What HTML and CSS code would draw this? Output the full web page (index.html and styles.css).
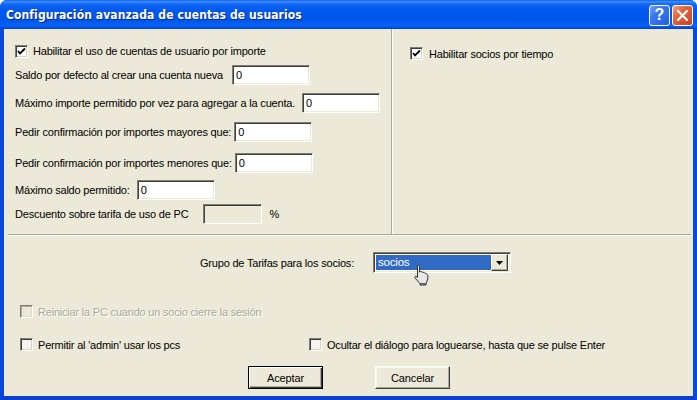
FILE: index.html
```html
<!DOCTYPE html>
<html lang="es">
<head>
<meta charset="utf-8">
<title>Configuración avanzada de cuentas de usuarios</title>
<link rel="stylesheet" href="styles.css">
</head>
<body>
<div class="window">
  <div class="titlebar">
    <span class="title">Configuración avanzada de cuentas de usuarios</span>
    <div class="tbtns">
      <span class="tbtn help">?</span>
      <span class="tbtn close"><svg width="11" height="11" viewBox="0 0 11 11"><path d="M1 1 L10 10 M10 1 L1 10" stroke="#fff" stroke-width="2.2" stroke-linecap="square"/></svg></span>
    </div>
  </div>
  <div class="client">
    <div class="top">
      <div class="left">
        <div class="row cbrow r1"><span class="cb checked"><svg width="9" height="9" viewBox="0 0 9 9"><path d="M1 4 L3 6.5 L8 1.5" stroke="#000" stroke-width="1.8" fill="none"/></svg></span><span>Habilitar el uso de cuentas de usuario por importe</span></div>
        <div class="row r2"><span>Saldo por defecto al crear una cuenta nueva</span><span class="input w77">0</span></div>
        <div class="row r3"><span>Máximo importe permitido por vez para agregar a la cuenta.</span><span class="input w77">0</span></div>
        <div class="row r4"><span>Pedir confirmación por importes mayores que:</span><span class="input w77">0</span></div>
        <div class="row r5"><span>Pedir confirmación por importes menores que:</span><span class="input w77">0</span></div>
        <div class="row r6"><span>Máximo saldo permitido:</span><span class="input w77">0</span></div>
        <div class="row r7"><span>Descuento sobre tarifa de uso de PC</span><span class="input disabled w58"></span><span class="pct">%</span></div>
      </div>
      <div class="right">
        <div class="row cbrow"><span class="cb checked"><svg width="9" height="9" viewBox="0 0 9 9"><path d="M1 4 L3 6.5 L8 1.5" stroke="#000" stroke-width="1.8" fill="none"/></svg></span><span>Habilitar socios por tiempo</span></div>
      </div>
    </div>
    <div class="sep"></div>
    <div class="grupo">
      <span class="glabel">Grupo de Tarifas para los socios:</span>
      <div class="combo">
        <span class="csel">socios</span>
        <span class="cbtn"><svg width="7" height="4" viewBox="0 0 7 4"><path d="M0 0 H7 L3.5 4 Z" fill="#000"/></svg></span>
        <svg class="cursor" width="18" height="22" viewBox="0 0 18 22"><path d="M5.5 1.5 C6.5 0.8 7.5 1.2 7.5 2.5 V8 L8.5 7.5 C9.5 7.2 10.2 7.8 10.3 8.5 C11 8 12 8.2 12.3 9 C13 8.8 14 9.2 14.2 10 C15 10 15.8 10.5 15.8 11.5 V15 L14 19.5 H8 L3 14 C2.3 13.2 2.8 12 4 12.3 L5.5 13.5 Z" fill="#e8e8e8" stroke="#333" stroke-width="1"/><path d="M8 19.5 V21 H14 V19.5" fill="#999" stroke="#333" stroke-width="1"/></svg>
      </div>
    </div>
    <div class="cbrow reiniciar disabled-text"><span class="cb dis"></span><span>Reiniciar la PC cuando un socio cierre la sesión</span></div>
    <div class="pair">
      <div class="cbrow"><span class="cb"></span><span>Permitir al 'admin' usar los pcs</span></div>
      <div class="cbrow"><span class="cb"></span><span>Ocultar el diálogo para loguearse, hasta que se pulse Enter</span></div>
    </div>
    <div class="buttons">
      <button class="btn default">Aceptar</button>
      <button class="btn">Cancelar</button>
    </div>
  </div>
</div>
</body>
</html>
```

FILE: styles.css
```css
* { box-sizing: border-box; }
html, body { margin: 0; padding: 0; background: #fff; }
body { font-family: "Liberation Sans", Arial, sans-serif; font-size: 11px; letter-spacing: -0.2px; color: #000; }

.window {
  width: 697px;
  height: 400px;
  display: flex;
  flex-direction: column;
  background: #0831d9;
  border-radius: 7px 7px 0 0;
  overflow: hidden;
}

.titlebar {
  height: 29px;
  flex: none;
  display: flex;
  align-items: center;
  justify-content: space-between;
  padding: 0 4px 0 6px;
  background: linear-gradient(to bottom, #0a5ff0 0%, #3d8fff 6%, #1368f5 14%, #0058ee 35%, #0055ea 70%, #0663f5 88%, #0050e0 96%, #003cc5 100%);
}
.title {
  color: #fff;
  font-weight: bold;
  font-size: 12px;
  font-family: "DejaVu Sans Condensed", "Liberation Sans", sans-serif;
  text-shadow: 1px 1px 0 #0a2a8a;
  letter-spacing: 0.1px;
  margin-top: 1px;
}
.tbtns { display: flex; gap: 2px; margin-top: 1px; }
.tbtn {
  width: 21px;
  height: 21px;
  border: 1px solid #fff;
  border-radius: 3px;
  display: flex;
  align-items: center;
  justify-content: center;
}
.help {
  background: linear-gradient(135deg, #6fa0ff 0%, #3a78f0 35%, #2460e0 100%);
  color: #fff;
  font-weight: bold;
  font-size: 16px;
  letter-spacing: 0;
  font-family: "Liberation Sans", sans-serif;
}
.close {
  background: linear-gradient(135deg, #f3a58a 0%, #e4683f 35%, #c9401c 100%);
}

.client {
  flex: 1;
  background: #ece9d8;
  border-left: 4px solid #0a48dc;
  border-right: 4px solid #0a48dc;
  border-bottom: 4px solid #0a3fd0;
  display: flex;
  flex-direction: column;
}

.top {
  height: 205px;
  display: flex;
}
.left {
  width: 388px;
  border-right: 1px solid #aca899;
  padding: 15px 0 0 11px;
  display: flex;
  flex-direction: column;
}
.right {
  flex: 1;
  border-left: 1px solid #fff;
  padding: 18px 0 0 17px;
}

.row { display: flex; align-items: center; gap: 5px; white-space: nowrap; }
.left .row:not(.cbrow) { height: 20px; }
.r1 { height: 14px; }
.left .r2 { margin-top: 7px; gap: 9px; }
.left .r3 { margin-top: 8px; gap: 7px; }
.left .r4 { margin-top: 9px; gap: 3px; }
.left .r5 { margin-top: 11px; gap: 3px; }
.left .r6 { margin-top: 7px; gap: 7px; }
.left .r7 { margin-top: 4px; gap: 15px; }
.pct { margin-left: -8px; }

.input {
  height: 20px;
  background: #fff;
  border-top: 1px solid #7f7c73;
  border-left: 1px solid #7f7c73;
  border-right: 1px solid #fff;
  border-bottom: 1px solid #fff;
  box-shadow: inset 1px 1px 0 #3f3e3a, inset -1px -1px 0 #ece9d8;
  padding: 2px 3px;
  line-height: 14px;
}
.input.disabled { background: #ece9d8; }
.w77 { width: 78px; }
.w58 { width: 59px; }

.cbrow { display: flex; align-items: center; gap: 5px; white-space: nowrap; }
.right .cbrow { gap: 6px; }
.cb {
  width: 13px;
  height: 13px;
  flex: none;
  background: #f4f3ee;
  border-top: 1px solid #7f7c73;
  border-left: 1px solid #7f7c73;
  border-right: 1px solid #fff;
  border-bottom: 1px solid #fff;
  box-shadow: inset 1px 1px 0 #3f3e3a, inset -1px -1px 0 #d8d4c4;
  display: flex;
  align-items: center;
  justify-content: center;
}
.cb.checked { background: #fff; }
.cb.dis { background: #ece9d8; box-shadow: inset 1px 1px 0 #aca899, inset -1px -1px 0 #e0ddcc; }
.disabled-text { color: #aca899; text-shadow: 1px 1px 0 #fff; }

.sep {
  height: 2px;
  margin: 0 2px 0 4px;
  border-top: 1px solid #aca899;
  border-bottom: 1px solid #fff;
}

.grupo {
  margin-top: 16px;
  padding-left: 196px;
  display: flex;
  align-items: center;
  height: 21px;
}
.glabel { width: 173px; flex: none; }
.combo {
  position: relative;
  width: 138px;
  height: 21px;
  display: flex;
  align-items: center;
  background: #fff;
  border-top: 1px solid #7f7c73;
  border-left: 1px solid #7f7c73;
  border-right: 1px solid #fff;
  border-bottom: 1px solid #fff;
  box-shadow: inset 1px 1px 0 #3f3e3a, inset -1px -1px 0 #ece9d8;
  padding: 2px;
}
.csel {
  flex: 1;
  height: 15px;
  background: #316ac5;
  color: #fff;
  line-height: 15px;
  padding-left: 2px;
  font-size: 11.5px;
}
.cbtn {
  width: 17px;
  height: 17px;
  flex: none;
  background: #ece9d8;
  border-top: 1px solid #fff;
  border-left: 1px solid #fff;
  border-right: 1px solid #3f3e3a;
  border-bottom: 1px solid #3f3e3a;
  box-shadow: inset -1px -1px 0 #aca899;
  display: flex;
  align-items: center;
  justify-content: center;
}
.cursor { position: absolute; left: 38px; top: 11px; }

.reiniciar { margin-top: 32px; padding-left: 16px; height: 13px; }
.pair {
  margin-top: 20px;
  padding-left: 16px;
  display: grid;
  grid-template-columns: 289px auto;
  height: 13px;
}

.buttons {
  margin-top: 15px;
  display: flex;
  justify-content: center;
  gap: 52px;
  padding-left: 1px;
}
.btn {
  width: 75px;
  height: 23px;
  font-family: "Liberation Sans", Arial, sans-serif;
  font-size: 11px;
  letter-spacing: -0.1px;
  color: #000;
  background: #ece9d8;
  border-top: 1px solid #fff;
  border-left: 1px solid #fff;
  border-right: 1px solid #3f3e3a;
  border-bottom: 1px solid #3f3e3a;
  box-shadow: inset -1px -1px 0 #aca899, inset 1px 1px 0 #f8f7f2;
  padding: 0;
}
.btn.default {
  border: 1px solid #000;
  box-shadow: inset 1px 1px 0 #fff, inset -1px -1px 0 #3f3e3a, inset -2px -2px 0 #aca899;
}
```
